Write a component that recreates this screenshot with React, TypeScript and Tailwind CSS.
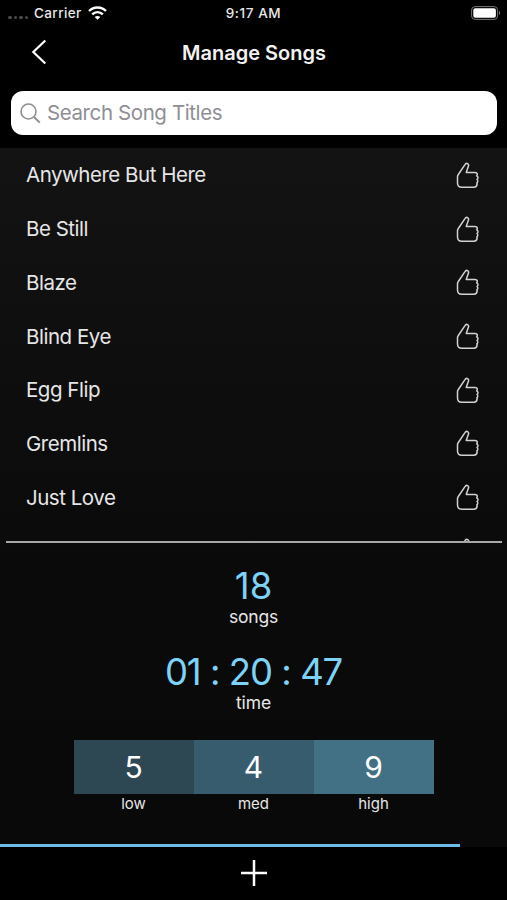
import React from "react";

interface Level {
    label: string;
    count: number;
    color: string;
}

const songs: string[] = [
    "Anywhere But Here",
    "Be Still",
    "Blaze",
    "Blind Eye",
    "Egg Flip",
    "Gremlins",
    "Just Love",
    "",
];

const levels: Level[] = [
    { label: "low", count: 5, color: "bg-[#2d4753]" },
    { label: "med", count: 4, color: "bg-[#365c6d]" },
    { label: "high", count: 9, color: "bg-[#427084]" },
];

const ThumbIcon: React.FC = () => {
    return (
        <svg className="mt-px" width="24" height="27" viewBox="0 0 24 27" fill="none" stroke="#d2d2d2" strokeWidth="1.5" strokeLinejoin="round" strokeLinecap="round">
            <path d="M1.5 14.8c0-.9.2-1.500.8-2.300L8.800 2.800c.7-1.200 1.800-1.700 2.800-1.200 1 .5 1.200 1.500.8 2.600L10.200 10.400h8.600c1.500 0 2.500.8 2.500 2 0 .7-.2 1.100-.6 1.500.9.500 1.300 1.100 1.300 1.900 0 .8-.4 1.300-1 1.700.5.400.8.900.8 1.600 0 .8-.4 1.400-1 1.700.3.400.4.800.3 1.300-.2 1.900-1.200 3.100-3.100 3.100H5.900c-2.600 0-4.400-1.700-4.400-4.300z" />
        </svg>
    )
}

const StatusBar: React.FC = () => {
    return (
        <div className="flex h-[26px] items-center text-[13.5px] font-medium text-[#e8e8e8]">
            <div className="flex w-[169px] items-center pl-2">
                <div className="flex gap-[2px] pt-2">
                    {[0, 1, 2, 3].map((dot) => (
                        <span key={dot} className="h-[3px] w-[3.5px] rounded-full bg-[#4a4a4a]" />
                    ))}
                </div>
                <span className="ml-[6px] tracking-[0.4px]">Carrier</span>
                <svg className="ml-[6px]" width="19" height="14" viewBox="0 0 19 14" fill="none" stroke="#ffffff" strokeWidth="2.4">
                    <path d="M1 5C5.700.4 13.300.4 18 5" />
                    <path d="M4.200 8.300c3-2.900 7.600-2.900 10.600 0" />
                    <path d="M9.500 13.800 6.700 11c1.600-1.500 4-1.500 5.600 0z" fill="#ffffff" stroke="none" />
                </svg>
            </div>
            <div className="w-[169px] text-center tracking-[0.6px]">9:17 AM</div>
            <div className="flex w-[169px] justify-end pr-[6px]">
                <svg width="30" height="14" viewBox="0 0 30 14">
                    <rect x="0.6" y="0.6" width="26" height="12.8" rx="3.5" fill="none" stroke="#777777" />
                    <rect x="2.3" y="2.3" width="22.6" height="9.4" rx="2" fill="#ffffff" />
                    <path d="M28 5c1.600.6 1.600 3.400 0 4z" fill="#777777" />
                </svg>
            </div>
        </div>
    )
}

export default function App() {
    return (
        <div className="flex h-[900px] w-[507px] flex-col overflow-hidden bg-black font-['Inter',sans-serif] text-[#e6e6e6]">
            <StatusBar />
            <div className="flex h-[52px] items-center">
                <div className="w-[100px] pl-[31px]">
                    <svg width="16" height="26" viewBox="0 0 16 26" fill="none" stroke="#ffffff" strokeWidth="2.2">
                        <path d="M14.300 1.500 2.300 13l12 11.500" />
                    </svg>
                </div>
                <div className="flex-1 pt-px text-center text-[20px] font-semibold text-[#f2f2f2]">Manage Songs</div>
                <div className="w-[99px]" />
            </div>
            <div className="h-[70px] pt-[13px] pr-[10px] pl-[11px]">
                <div className="flex h-[44px] items-center rounded-[12px] bg-white pl-[9px] text-[20.5px] text-[#8e8e93]">
                    <svg width="21" height="21" viewBox="0 0 21 21" fill="none" stroke="#8e8e93" strokeWidth="1.6">
                        <circle cx="8.5" cy="8.5" r="7.5" />
                        <path d="m14 14 5.800 5.600" strokeWidth="2" />
                    </svg>
                    <span className="ml-[6px] tracking-[-0.4px]">Search Song Titles</span>
                </div>
            </div>
            <div className="flex h-[695.5px] flex-col bg-linear-to-b from-[#131313] via-[#0a0a0a] via-60% to-[#090909]">
                <div className="h-[393px] overflow-hidden">
                    {songs.map((song, index) => (
                        <div key={index} className="flex h-[53.7px] items-center justify-between pr-[27px] pl-[26px] text-[20.5px] tracking-[-0.48px]">
                            <span className="pt-[2px]">{song}</span>
                            <ThumbIcon />
                        </div>
                    ))}
                </div>
                <div className="mr-[5px] ml-[6px] h-[1.5px] shrink-0 bg-[#a8a8a8]" />
                <div className="flex flex-col items-center pt-[21px]">
                    <div className="text-[36.5px] leading-[44px] text-[#7dd3f7]">18</div>
                    <div className="-mt-px text-[17.5px] leading-[20px] tracking-[-0.2px]">songs</div>
                    <div className="pt-[23px] text-[36.5px] leading-[44px] tracking-[-1.2px] [word-spacing:0.5px] text-[#7dd3f7]">01 : 20 : 47</div>
                    <div className="-mt-px text-[17.5px] leading-[20px] tracking-[-0.1px]">time</div>
                    <div className="flex pt-[27px]">
                        {levels.map((level) => (
                            <div key={level.label} className="w-[120px] text-center">
                                <div className={`h-[54px] text-[30px] leading-[54px] text-white ${level.color}`}>{level.count}</div>
                                <div className="text-[15px] leading-[19px]">{level.label}</div>
                            </div>
                        ))}
                    </div>
                </div>
            </div>
            <div className="h-[56.5px] bg-black">
                <div className="h-[3px] bg-[#090909]">
                    <div className="h-[3px] w-[460px] bg-[#6dbbe6]" />
                </div>
                <div className="flex h-[53px] items-center justify-center">
                    <svg width="26" height="26" viewBox="0 0 26 26" fill="none" stroke="#ffffff" strokeWidth="2.5">
                        <path d="M13 0v26M0 13h26" />
                    </svg>
                </div>
            </div>
        </div>
    )
}
